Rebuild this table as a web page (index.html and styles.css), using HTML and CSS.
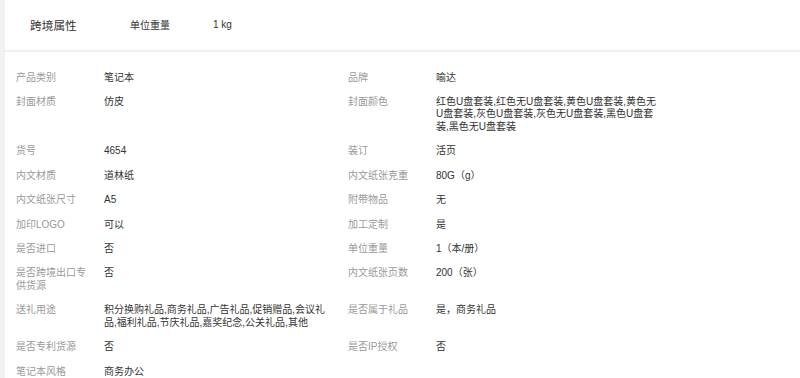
FILE: index.html
```html
<!DOCTYPE html>
<html lang="zh-CN">
<head>
<meta charset="utf-8">
<title>商品属性</title>
<link rel="stylesheet" href="styles.css">
</head>
<body>
<div class="page">
  <div class="rail"></div>
  <div class="main">
    <div class="head">
      <div class="head-title">跨境属性</div>
      <div class="head-label">单位重量</div>
      <div class="head-value">1 kg</div>
    </div>
    <div class="specs">
      <div class="label">产品类别</div><div class="value first">笔记本</div>
      <div class="label">品牌</div><div class="value">喻达</div>

      <div class="label">封面材质</div><div class="value first">仿皮</div>
      <div class="label">封面颜色</div><div class="value">红色U盘套装,红色无U盘套装,黄色U盘套装,黄色无U盘套装,灰色U盘套装,灰色无U盘套装,黑色U盘套装,黑色无U盘套装</div>

      <div class="label">货号</div><div class="value first">4654</div>
      <div class="label">装订</div><div class="value">活页</div>

      <div class="label">内文材质</div><div class="value first">道林纸</div>
      <div class="label">内文纸张克重</div><div class="value">80G（g）</div>

      <div class="label">内文纸张尺寸</div><div class="value first">A5</div>
      <div class="label">附带物品</div><div class="value">无</div>

      <div class="label">加印LOGO</div><div class="value first">可以</div>
      <div class="label">加工定制</div><div class="value">是</div>

      <div class="label">是否进口</div><div class="value first">否</div>
      <div class="label">单位重量</div><div class="value">1（本/册）</div>

      <div class="label">是否跨境出口专供货源</div><div class="value first">否</div>
      <div class="label">内文纸张页数</div><div class="value">200（张）</div>

      <div class="label">送礼用途</div><div class="value first">积分换购礼品,商务礼品,广告礼品,促销赠品,会议礼品,福利礼品,节庆礼品,嘉奖纪念,公关礼品,其他</div>
      <div class="label">是否属于礼品</div><div class="value">是，商务礼品</div>

      <div class="label">是否专利货源</div><div class="value first">否</div>
      <div class="label">是否IP授权</div><div class="value">否</div>

      <div class="label">笔记本风格</div><div class="value first">商务办公</div>
      <div class="label"></div><div class="value"></div>
    </div>
  </div>
</div>
</body>
</html>
```
FILE: styles.css
```css
html, body {
  margin: 0;
  padding: 0;
  background: #ffffff;
}

body {
  font-family: "Liberation Sans", "Noto Sans CJK SC", Arial, sans-serif;
  color: #333333;
}

.page {
  display: flex;
  min-height: 378px;
}

.rail {
  width: 5px;
  flex: none;
  background: #f2f2f2;
}

.main {
  flex: 1;
  min-width: 0;
}

.head {
  display: flex;
  align-items: center;
  padding-left: 25px;
  padding-bottom: 2px;
  border-bottom: 2px solid #efefef;
  box-sizing: border-box;
  height: 52px;
}

.head-title {
  width: 100px;
  font-size: 11.7px;
  color: #333333;
}

.head-label {
  width: 83px;
  font-size: 10px;
  color: #333333;
}

.head-value {
  font-size: 10px;
  color: #333333;
}

.specs {
  display: grid;
  grid-template-columns: 88px 244px 88px 223px;
  row-gap: 12.2px;
  padding: 19.5px 0 0 11px;
  font-size: 10px;
  line-height: 12.3px;
}

.label {
  color: #9a9a9a;
  padding-right: 10px;
}

.value {
  color: #333333;
}

.value.first {
  padding-right: 21px;
}
```
